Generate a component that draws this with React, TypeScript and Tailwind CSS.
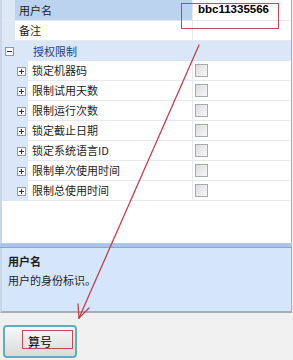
const font = { fontFamily: '"Noto Sans CJK SC", "Liberation Sans", sans-serif' };

const items = [
  "锁定机器码",
  "限制试用天数",
  "限制运行次数",
  "锁定截止日期",
  "锁定系统语言ID",
  "限制单次使用时间",
  "限制总使用时间",
];

function Box({ sign }: { sign: "+" | "-" }) {
  return (
    <div className="relative w-[9px] h-[9px] border border-[#8a98ac] bg-white">
      <div className="absolute left-[1px] top-[3px] w-[5px] h-px bg-[#334]" />
      {sign === "+" && <div className="absolute left-[3px] top-[1px] w-px h-[5px] bg-[#334]" />}
    </div>
  );
}

function Check() {
  return (
    <div className="w-[13px] h-[13px] border border-[#a9a9a9] bg-gradient-to-br from-[#dcdcdc] to-[#f7f7f7]" />
  );
}

export default function App() {
  return (
    <div className="relative w-[293px] h-[360px] overflow-hidden bg-[#f0f0f0] text-[11px] text-[#1e1e1e]" style={font}>
      {/* property grid */}
      <div className="h-[243px] w-[292px] bg-white border-l-2 border-r border-l-[#c9d6e8] border-r-[#9cb0cc]">
        <div className="flex h-[21px] border-b border-[#e6e9ee]">
          <div className="w-[13px] bg-[#dde8f6]" />
          <div className="w-[177px] bg-[#bcd3f0] flex items-center pl-[4px]">用户名</div>
          <div className="flex-1 border-l border-[#e6e9ee] flex items-center pl-[5px] font-bold text-[11.5px] text-black" style={{ fontFamily: '"Liberation Sans", sans-serif' }}>
            bbc11335566
          </div>
        </div>
        <div className="flex h-[20px] border-b border-[#e6e9ee]">
          <div className="w-[13px] bg-[#dde8f6]" />
          <div className="w-[177px] flex items-center pl-[4px]">备注</div>
          <div className="flex-1 border-l border-[#e6e9ee]" />
        </div>
        <div className="flex items-center h-[20px] bg-[#dae7f9] text-[#213f80]">
          <div className="w-[13px] flex justify-center pl-[2px]">
            <Box sign="-" />
          </div>
          <div className="pl-[18px]">授权限制</div>
        </div>
        {items.map((t) => (
          <div key={t} className="flex h-[20px]">
            <div className="w-[26px] bg-[#dae7f9] flex items-center justify-end pr-[2px]">
              <Box sign="+" />
            </div>
            <div className="w-[164px] flex items-center pl-[4px] border-b border-[#e6e9ee]">{t}</div>
            <div className="flex-1 border-l border-b border-[#e6e9ee] flex items-center pl-[2px]">
              <Check />
            </div>
          </div>
        ))}
      </div>

      {/* splitter */}
      <div className="h-[5px] w-[292px] border-t border-[#b7c9e2] bg-[#a9c3ea] border-b border-b-[#8aa6cf]" />

      {/* description */}
      <div className="h-[65px] w-[292px] bg-[#d5e5fc] border-l-2 border-r border-l-[#c9d6e8] border-r-[#9cb0cc] border-b-2 border-b-[#a4adb8] pl-[6px] pt-[5px]">
        <div className="font-bold leading-[16px]">用户名</div>
        <div className="leading-[16px] mt-[3px]">用户的身份标识。</div>
      </div>

      {/* button */}
      <div className="pl-[3px] pt-[12px]">
        <button className="w-[74px] h-[33px] rounded-[4px] border-2 border-[#62aebf] bg-gradient-to-b from-[#f8f8f8] to-[#d9d9d9] text-[12px] text-black flex items-center pl-[23px]">
          算号
        </button>
      </div>

      {/* annotations */}
      <div className="absolute left-[181px] top-[3px] w-[98px] h-[26px] border-[1.5px] border-[#c24a58]" />
      <div className="absolute left-[22px] top-[330px] w-[51px] h-[19px] border-[1.5px] border-[#c24a58]" />
      <svg className="absolute left-0 top-0" width="293" height="360">
        <g stroke="#c24050" strokeWidth="1.3" fill="none" strokeLinecap="round">
          <line x1="199" y1="45" x2="79" y2="318" />
          <line x1="79" y1="318" x2="89" y2="308" />
          <line x1="79" y1="318" x2="78" y2="304" />
        </g>
      </svg>
    </div>
  );
}
